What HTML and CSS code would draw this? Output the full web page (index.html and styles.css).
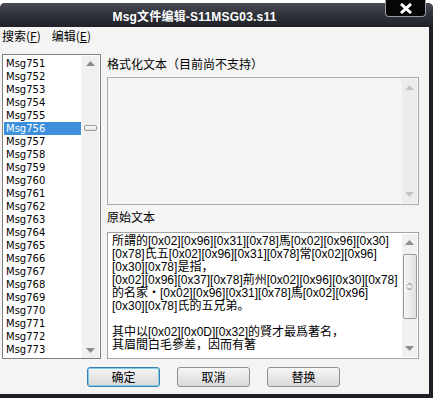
FILE: index.html
```html
<!DOCTYPE html>
<html lang="zh">
<head>
    <meta charset="UTF-8">
    <title>Msg文件编辑</title>
    <link rel="stylesheet" href="styles.css">
</head>
<body>
<div class="window">
    <div class="titlebar"><span class="title">Msg文件编辑-S11MSG03.s11</span></div>
    <div class="closebtn">
        <svg width="14" height="11" viewBox="0 0 14 11"><path d="M2 1 L12 10 M12 1 L2 10" stroke="#fff" stroke-width="3"/></svg>
    </div>
    <div class="client">
        <div class="menubar">
            <span class="menu">搜索(<u>F</u>)</span>
            <span class="menu">编辑(<u>E</u>)</span>
        </div>
        <div class="main">
            <div class="listbox">
                <div class="items">
                    <div class="item">Msg751</div>
                    <div class="item">Msg752</div>
                    <div class="item">Msg753</div>
                    <div class="item">Msg754</div>
                    <div class="item">Msg755</div>
                    <div class="item selected">Msg756</div>
                    <div class="item">Msg757</div>
                    <div class="item">Msg758</div>
                    <div class="item">Msg759</div>
                    <div class="item">Msg760</div>
                    <div class="item">Msg761</div>
                    <div class="item">Msg762</div>
                    <div class="item">Msg763</div>
                    <div class="item">Msg764</div>
                    <div class="item">Msg765</div>
                    <div class="item">Msg766</div>
                    <div class="item">Msg767</div>
                    <div class="item">Msg768</div>
                    <div class="item">Msg769</div>
                    <div class="item">Msg770</div>
                    <div class="item">Msg771</div>
                    <div class="item">Msg772</div>
                    <div class="item">Msg773</div>
                    <div class="item">Msg774</div>
                </div>
                <div class="vscroll list-scroll">
                    <svg class="arrow" width="9" height="5" viewBox="0 0 9 5"><path d="M0 5 L4.5 0 L9 5 Z" fill="#8c8c8c"/></svg>
                    <div class="track">
                        <div class="spacer-top"></div>
                        <div class="thumb-small"></div>
                    </div>
                    <svg class="arrow" width="9" height="5" viewBox="0 0 9 5"><path d="M0 0 L4.5 5 L9 0 Z" fill="#8c8c8c"/></svg>
                </div>
            </div>
            <div class="panel">
                <div class="label">格式化文本（目前尚不支持）</div>
                <div class="textbox disabled">
                    <div class="textbody"></div>
                    <div class="vscroll box-scroll">
                        <svg class="arrow" width="9" height="5" viewBox="0 0 9 5"><path d="M0 5 L4.5 0 L9 5 Z" fill="#c4c4c4"/></svg>
                        <div class="track"></div>
                        <svg class="arrow" width="9" height="5" viewBox="0 0 9 5"><path d="M0 0 L4.5 5 L9 0 Z" fill="#c4c4c4"/></svg>
                    </div>
                </div>
                <div class="label label-second">原始文本</div>
                <div class="textbox">
                    <div class="textbody raw">所謂的[0x02][0x96][0x31][0x78]馬[0x02][0x96][0x30]<br>[0x78]氏五[0x02][0x96][0x31][0x78]常[0x02][0x96]<br>[0x30][0x78]是指，<br>[0x02][0x96][0x37][0x78]荊州[0x02][0x96][0x30][0x78]<br>的名家・[0x02][0x96][0x31][0x78]馬[0x02][0x96]<br>[0x30][0x78]氏的五兄弟。<br><br>其中以[0x02][0x0D][0x32]的賢才最爲著名，<br>其眉間白毛參差，因而有著</div>
                    <div class="vscroll box-scroll">
                        <svg class="arrow" width="9" height="5" viewBox="0 0 9 5"><path d="M0 5 L4.5 0 L9 5 Z" fill="#8c8c8c"/></svg>
                        <div class="track">
                            <div class="thumb">
                                <svg width="7" height="9" viewBox="0 0 7 9"><path d="M1 3.5 L3.5 1 L6 3.5 M1 5.5 L3.5 8 L6 5.5" stroke="#777" stroke-width="1" fill="none"/></svg>
                            </div>
                        </div>
                        <svg class="arrow" width="9" height="5" viewBox="0 0 9 5"><path d="M0 0 L4.5 5 L9 0 Z" fill="#8c8c8c"/></svg>
                    </div>
                </div>
            </div>
        </div>
        <div class="buttons">
            <div class="btn default">确定</div>
            <div class="btn">取消</div>
            <div class="btn">替换</div>
        </div>
    </div>
</div>
</body>
</html>
```

FILE: styles.css
```css
body {
    margin: 0;
    background-color: #ffffff;
    font-family: "Liberation Sans", "Noto Sans CJK SC", sans-serif;
    font-size: 12px;
    color: #000;
}
.window {
    position: relative;
    margin-top: 3px;
    width: 433px;
    height: 395px;
    background-color: #1d1f25;
    display: flex;
    flex-direction: column;
    border-radius: 5px 5px 0 0;
}
.titlebar {
    height: 24px;
    flex: none;
    background: linear-gradient(#4a4d55, #30333a 45%, #202228);
    border-radius: 5px 5px 0 0;
    display: flex;
    align-items: center;
    justify-content: center;
    padding-right: 44px;
}
.title {
    color: #ffffff;
    font-weight: bold;
    font-size: 12px;
    font-family: "Liberation Sans", "Noto Sans CJK SC", sans-serif;
    letter-spacing: 0.2px;
}
.closebtn {
    position: absolute;
    top: -3px;
    left: 385px;
    width: 41px;
    height: 17px;
    box-sizing: border-box;
    background-color: #060606;
    border: 1px solid #9a9ca2;
    border-top: none;
    border-radius: 0 0 4px 4px;
    display: flex;
    align-items: center;
    justify-content: center;
}
.client {
    flex: 1;
    background-color: #f4f4f4;
    margin-right: 4px;
    margin-bottom: 4px;
    display: flex;
    flex-direction: column;
    padding-left: 2px;
}
.menubar {
    height: 18px;
    display: flex;
    align-items: center;
    gap: 11px;
}
.menu {
    font-family: "Noto Sans CJK SC", sans-serif;
    font-size: 12px;
    line-height: 14px;
}
.main {
    display: flex;
    padding-top: 9px;
}
.listbox {
    width: 99px;
    height: 305px;
    box-sizing: border-box;
    border: 1px solid #7f7f7f;
    background-color: #ffffff;
    display: flex;
    padding: 1px 1px 0 1px;
    overflow: hidden;
}
.items {
    flex: 1;
    padding-top: 1px;
    overflow: hidden;
}
.item {
    height: 13px;
    line-height: 13px;
    padding-left: 2px;
    font-family: "DejaVu Sans", sans-serif;
    font-size: 10px;
}
.item.selected {
    background-color: #3d8fdc;
    color: #ffffff;
}
.vscroll {
    display: flex;
    flex-direction: column;
    align-items: center;
    background-color: #f0f0f0;
}
.vscroll .arrow {
    flex: none;
    margin: 5px 0;
}
.vscroll .track {
    flex: 1;
    width: 100%;
    display: flex;
    flex-direction: column;
    align-items: center;
}
.list-scroll {
    width: 17px;
    border-left: 1px solid #f7f7f7;
}
.spacer-top {
    height: 54px;
}
.thumb-small {
    width: 13px;
    height: 6px;
    box-sizing: border-box;
    border: 1px solid #9a9a9a;
    border-radius: 2px;
    background: linear-gradient(#fdfdfd, #e2e2e2);
}
.panel {
    margin-left: 6px;
    width: 312px;
    padding-top: 2px;
    display: flex;
    flex-direction: column;
}
.label {
    height: 16px;
    line-height: 16px;
    font-family: "Noto Sans CJK SC", sans-serif;
    font-size: 12px;
}
.label-second {
    margin-top: 4px;
}
.textbox {
    margin-top: 5px;
    height: 128px;
    box-sizing: border-box;
    border: 1px solid #a3a3a3;
    background-color: #ffffff;
    display: flex;
}
.label-second + .textbox {
    margin-top: 7px;
    height: 127px;
}
.textbox.disabled {
    background-color: #f4f4f4;
    border-color: #ababab;
}
.textbox.disabled .vscroll {
    background-color: #ececec;
}
.textbody {
    flex: 1;
    overflow: hidden;
}
.raw {
    padding: 2px 0 0 4px;
    line-height: 13px;
    font-family: "Liberation Sans", "Noto Sans CJK TC", sans-serif;
    font-size: 12px;
    white-space: nowrap;
}
.box-scroll {
    width: 15px;
    margin: 1px 1px 1px 0;
}
.box-scroll .arrow {
    margin: 6px 0;
}
.thumb {
    margin-top: 3px;
    width: 14px;
    height: 65px;
    box-sizing: border-box;
    border: 1px solid #9a9a9a;
    border-radius: 2px;
    background: linear-gradient(90deg, #f6f6f6, #e0e0e0);
    display: flex;
    align-items: center;
    justify-content: center;
}
.buttons {
    display: flex;
    padding-left: 85px;
    gap: 17px;
    margin-top: 8px;
}
.btn {
    width: 73px;
    height: 20px;
    box-sizing: border-box;
    border: 1px solid #8e8f8f;
    border-radius: 3px;
    background: linear-gradient(#f6f6f6, #e7e7e7 50%, #d9d9d9);
    text-align: center;
    line-height: 18px;
    font-family: "Noto Sans CJK SC", sans-serif;
    font-size: 12px;
}
.btn.default {
    border-color: #3c7fb1;
    box-shadow: inset 0 0 0 1px #7fcde8;
}
```
